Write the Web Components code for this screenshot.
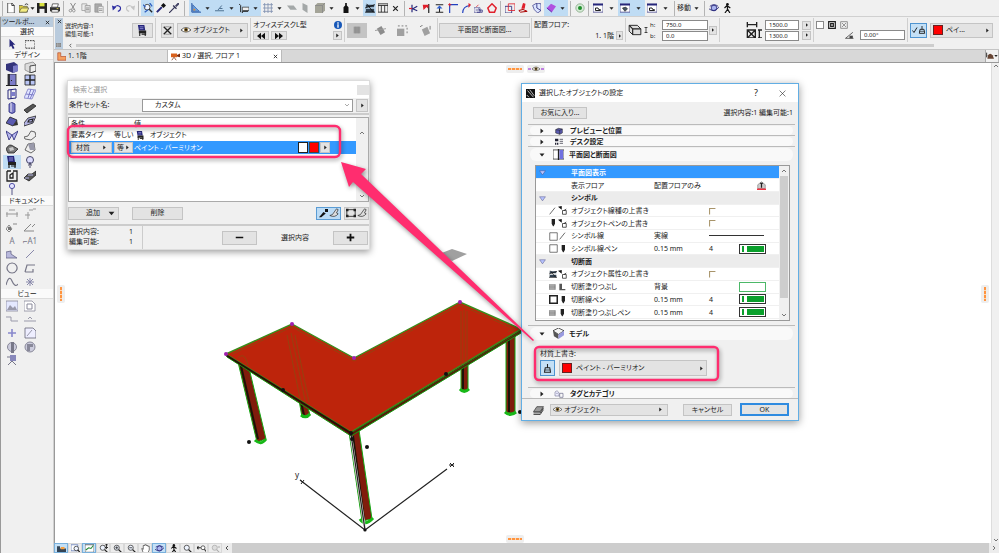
<!DOCTYPE html>
<html lang="ja">
<head>
<meta charset="utf-8">
<title>3D / 選択, フロア 1</title>
<style>
html,body{margin:0;height:100%;overflow:hidden;background:#f0f0f0}
body{font:7px/10px "Noto Sans","Noto Sans CJK JP",sans-serif;font-feature-settings:"palt";color:#222}
</style>
</head>
<body>
<cad-app></cad-app>
<script>
const BASE = `
*{box-sizing:border-box}
button,input,select{font:inherit;font-feature-settings:inherit;color:inherit;margin:0;padding:0;border:1px solid #c4c4c4;border-radius:0;background:#e3e3e3;outline:0;min-width:0}
button{display:flex;align-items:center;justify-content:center;white-space:nowrap;overflow:hidden}
input{background:#fff;border-color:#8a8a8a}
select{appearance:none}
h1,h2,p{margin:0;font:inherit}
.s{flex:1}
`;
class Base extends HTMLElement {
  connectedCallback() {
    if (this.shadowRoot) return;
    const t = document.createElement('template');
    t.innerHTML = `<style>${BASE}${this.css()}</style>${this.html()}`;
    this.attachShadow({mode:'open'}).append(t.content.cloneNode(true));
  }
}
const box = '<path d="M1 4l4-2 6 1v6l-4 2-6-2z" fill="#5a5ab0" stroke="#222" stroke-width=".8"/><path d="M1 4l6 1 4-2M7 5v6" stroke="#222" fill="none" stroke-width=".8"/>';
const g = (c,d,w=1) => `<path d="${d}" fill="none" stroke="${c}" stroke-width="${w}"/>`;
const f = (c,d,s='none') => `<path d="${d}" fill="${c}" stroke="${s}" stroke-width=".8"/>`;
const K='#222', N='#26267a', P='#7c7cc8', G='#909090', R='#e0202c';
const eye = f('#fff','M0 6q6-6 12 0q-6 5-12 0z',K)+'<circle cx="6" cy="5.8" r="2.4" fill="#8a6a2a"/><circle cx="6" cy="5.8" r="1.2" fill="#111"/>';
const mag = '<circle cx="5" cy="5" r="3.4" fill="#eef4ff" stroke="#333"/>'+g(K,'M7.5 7.5l3.5 3.5',1.6);
const chair = f(N,'M1 0h7l1 6H2z')+g('#9090d8','M3 2h4M3 4h4')+f('#222','M2 6h8v3H2z')+g(K,'M3 8v4M9 8v4M5 10h5',1.2);
const pen = f(K,'M4 0h5v7l-2 4-1 0-2-4z');
const brush = g(K,'M6 0v5M3 5h6l1 6h-8z',1.4)+g(K,'M2 8h8',1);
const ICONS = {
  caret:f(K,'M1 3h10l-5 6z'), right:f(K,'M3 1l6 5-6 5z'), down:f(K,'M1 3h10l-5 6z'), left:f(K,'M9 1L3 6l6 5z'),
  rew:f('#111','M6 1v10L0 6zM12 1v10L6 6z'), fwd:f('#111','M0 1v10l6-5zM6 1v10l6-5z'),
  tri:f('#b8c4ff','M1 3h10l-5 7z','#4a4a80'), chevd:g('#555','M2 4l4 4 4-4'), chevu:g('#555','M2 8l4-4 4 4',1.6), chevdn:g('#555','M2 4l4 4 4-4',1.6),
  chevl:g('#222','M8 2L4 6l4 4',1.6), chevr:g('#555','M4 2l4 4-4 4',1.6),
  x:g(K,'M2 2l8 8M10 2l-8 8',2), thinx:g(K,'M1 1l10 10M11 1L1 11',1),
  new:f('#fff','M2 0h5l3 3v9H2z',K)+g(K,'M7 0v3h3'), open:f('#d8c840','M0 3h4l1 1h5v7H0z','#554')+f('#f4ec80','M0 11l3-5h9l-3 5z','#554')+g(K,'M7 2q2-2 4 0'),
  save:f('#222','M0 0h12v12H0z')+f('#d8e040','M3 0h6v4H3z')+f('#eee','M3 7h6v5H3z'), print:f('#333','M0 5h12v5H0z')+f('#fff','M3 1h7l-1 4H2zM2 8h8v3H2z',K)+f('#d8d040','M8 6h2v1H8z'),
  cut:g('#888','M3 0l5 8M9 0L4 8',1.2)+g('#888','M4 8a1.6 1.6 0 1 0 .1.1M8 8a1.6 1.6 0 1 0 .1.1'), copy:f('#eee','M1 1h6v8H1z',G)+f('#ddd','M5 3h6v8H5z',G)+g(G,'M6 6h4M6 8h4'), paste:f('#aaa','M1 1h8v10H1z',G)+f('#eee','M5 4h6v8H5z',G)+g(G,'M6 7h4M6 9h4'),
  undo:g('#2b2ba0','M2 6q4-5 8-1 1 4-3 5',1.4)+f('#2b2ba0','M0 3l1 6 4-4z'), redo:g('#c4c4c4','M10 6q-4-5-8-1-1 4 3 5',1.4)+f('#c4c4c4','M12 3l-1 6-4-4z'),
  find:mag+g('#3060c0','M0 2l3 3M8 0l3 4M2 11l4-3',1.6), drop:g(N,'M1 11l6-6',2.4)+f('#111','M6 3l3-3 3 3-3 3z'), syringe:g('#335','M0 12l7-7',1.4)+g('#335','M5 3l4 4',1.6)+g('#446','M8 4l4-4',2.4),
  ruler:g('#2858a8','M1 0v11h11',1.2)+f('#6aa0dc','M2 2l8 8H2z','#2858a8')+f('#e08a30','M3 7h2v2H3z'), guide:g('#446688','M0 9h12M4 8l5-6M6 6h4',1.2), snap:f('#eee','M4 5h8v4H4z',K)+g(K,'M0 1l2 2v8M4 12v-2h7',1.2),
  grid:g('#8090b0','M2 0v12M6 0v12M10 0v12M0 2h12M0 6h12M0 10h12'), plane:f('#a4a8a8','M0 3h8l4 5H4z'), vplane:f('#a4a8a8','M3 0l6 3v9L3 8z'), cube:f('#a4a498','M0 3l3-3h9v9l-3 3H0z')+g('#888','M0 3h9v9M9 3l3-3'),
  drop2:f('#111','M5 0h2v3l2 2v7H3V5l2-2z'), stack:f('#345','M1 2h10v3H1zM1 7h10v4H1z')+g('#111','M0 6l12-4M2 1l8 10M0 11h12'), frame:g(K,'M0 1h12v10H0zM0 3h12M4 3v8M8 3v8'),
  split:g(N,'M4 1v10M4 7l7-4M4 6l7 3',1.6)+g(R,'M0 6h4',1.6), adj:g(K,'M9 0v12',1.6)+f(R,'M1 1l8 0-1 5-2-2-4 4z'), elev:g(K,'M1 1h10M1 11h10M6 5v6',1.4)+f('#3060d0','M2 6l4-4 4 4z'),
  cornr:g('#2040c0','M2 12V2h10',1.4)+g(R,'M0 2h4M2 0v4'), arc:g('#2040c0','M2 12q0-8 9-9',1.4)+f(R,'M9 0l3 2-3 4z'), resz:f('#fff','M0 5h8v6H0z',N)+g(R,'M3 4l3-3')+g(N,'M2 8h9v3H4M6 6l3 4'), house:g(R,'M1 6l5-5 5 5-2 5H3z',1.8),
  trim:g(N,'M0 4h8v8H0z')+g(R,'M4 1h8v8H4z'), boot:f(R,'M6 0l3 1-1 6H4z')+g('#a00','M1 9q5-3 10 1l-8 1z',1.2), shell:f('#dde6ff','M2 3l5-3 5 1v8l-4 3-4-4z',N)+g(N,'M7 0v6l5 3'),
  eraser:f('#b050e0','M1 6l5-5 6 3-5 7z')+g('#5020a0','M1 6l6 5'), green:'<circle cx="6" cy="6" r="5" fill="#d8ecd8" stroke="#8a8"/><circle cx="6" cy="6" r="2.4" fill="#20902c"/>',
  win:f('#fff','M0 1h12v10H0z',N)+g(N,'M0 2h12',2)+g(K,'M3 9V6h3l1 2h2v1z',1.2), win3:f('#fff','M0 1h12v10H0z',N)+g(N,'M0 2h12',2)+f('#456','M3 6l4-1 2 2-3 3z',K), orbit:'<circle cx="6" cy="6" r="3.4" fill="#aab4f0" stroke="#26267a"/>'+g(N,'M0 7q6 5 12-2M1 4q5-4 10 0'),
  walk:'<circle cx="6.5" cy="1.6" r="1.6" fill="#111"/>'+g('#111','M6.5 3v5l-3 4M6.5 7l3 5M3 6l3-3 4 3',1.4),
  chair, eye, pen, brush,
  mesh:g(K,'M1 1l10 10M11 1L1 11',1.8)+g('#888','M3 1h6M3 11h6'), info:'<circle cx="6" cy="6" r="6" fill="#1858b8"/>'+g('#fff','M6 2v2M6 5v5',2),
  sq:f('#999','M2 2h8v8H2z')+g('#888','M4 2v8M6 2v8M8 2v8',.6), sqr:f('#8c8c8c','M2 4l5-3 4 7-5 3z')+g('#999','M0 6l12-2'), sqe:f('#a0a0a0','M0 4h8v8H0z')+'<path d="M1 1h10v10" fill="none" stroke="#777" stroke-dasharray="2 2"/>', sqt:f('#a0a0a0','M2 5l6-3 3 7-6 3z')+g('#777','M0 2l3-2M11 1v4'),
  height:f('#ddd','M1 2h7l3 3v5H4L1 7z',K)+g(K,'M4 5h7M4 5v5M1 2l3 3'), vdim:g(K,'M6 0v12M3 1h6M3 11h6',1.5),
  dims:g(K,'M1 2h7M1 0v4M8 0v4M1 6h6v6H1zM1 6l6 6M7 6l-6 6M10 6v6M9 6h3M9 12h3'), anchor:g(K,'M1 1h10v10H1zM4 4h4v4H4z',1.8), anch2:g('#666','M1 1h10v10H1zM3 3l6 6M9 3l-6 6'), angle:g(K,'M0 11L11 2M0 11h12')+'<path d="M6 7h5v4H6z" fill="#444"/>',
  plan:f('#f4a060','M1 1h4v5h7v5H1z','#b04020'), cam:f('#d8601c','M0 2h8v5H0z')+f('#7a2c10','M8 4l4-2v5l-4-1z')+g('#7a2c10','M4 7l-3 4M4 7l3 4'),
  arrow:f(N,'M3 0l7 7-3 0 2 4-2 1-2-4-2 2z'), marq:'<path d="M0 2h12v9H0z" fill="none" stroke="#333" stroke-width="1.2" stroke-dasharray="2 1"/>',
  wall:f('#34347c','M0 3l8-2 4 3v6l-5 2-7-3z')+f(P,'M7 5l5-1v6l-5 2z'), wallg:f('#ddd','M1 3l8-2 3 3v6l-5 2-6-3z','#888')+f('#eee','M6 5l6-1v6l-6 2z',K),
  door:f(P,'M2 0h8v12H2z',K)+f(K,'M5 6h1v1H5zM0 11h12v1H0z')+g(K,'M3 0v12',1.6), window:f('#b8c4f4','M1 1h10v10H1z',K)+g(K,'M6 1v10M1 6h10',1.4), curtain:g(N,'M2 2l8-1v9l-8 1zM5 2v9')+f(P,'M5 4h4v4H5z'), grid2:f('#e0e4ff','M4 1l8 1-4 9-8-1z',P)+g(P,'M2 6l8 1M7 1L4 10M10 2L6 11'),
  column:f(P,'M3 2q3-3 6 0v8q-3 3-6 0z',N)+g('#dde','M5 1v9',1.2), beam:f('#555','M0 8L9 2l3 2-9 7z',K), roof:f('#5a5ab0','M0 8l4-6 7 3-4 6z',K)+f('#333','M7 11l4-6 1 5z'), slab:f('#b4b4e4','M0 8l4-5 8-2-3 7-9 3z',K)+g(K,'M4 7l1-2 4-1-1 3z',1.2),
  shellr:f('#b8b8ee','M0 2l6 4 6-4-4 9-2-5-3 5z',N), morph:f('#eee','M0 8l4-1 3-5 4 1 1 4-5 4-6-1z','#444'), mesh2:f('#777','M0 7q3-6 7-3l5 3-4 4H2z',K)+f('#ccc','M3 6l4-1 1 3-4 1z'), poly:f('#eee','M1 8l3-6 6-1 1 7-4 3z','#444')+f('#99a','M4 2l2 6 5 0-1-7z'),
  lamp:'<circle cx="6" cy="4" r="3.5" fill="#dcdcff" stroke="#446"/>'+g('#446','M6 6v3M4 9h4M5 11h2',1.2), zone:g(K,'M1 1h4M7 1h4v10H1V1M4 5l3-2v5H4z',1.3), stair:f('#555','M0 8L4 4h4l4-3v4L5 11z',K)+g('#bbe','M1 8h4M4 5h5',1),
  pin:'<circle cx="6" cy="3" r="2.6" fill="#e4e4ff" stroke="#55a"/>'+g('#558','M6 5v7',1),
  dim:g('#999','M0 7h12M1 5v5M11 5v5M3 3h6'), lev:g('#999','M1 8h5M4 5v7M5 3h4M9 2h3'), rad:g('#888','M3 4l3 4-3 3-3-3zM7 3h4')+f('#777','M2 6h3v3H2z'), ang:g('#888','M0 10L7 3M0 10h10M8 6l3-3'),
  fill:f('#b8b8dc','M0 10V4l5-1v3l6 4z','#668'), line:g('#88a','M2 10l8-8'), circ:g('#778','M6 1a5 5 0 1 0 .1 0z',1.2), pline:g('#778','M1 10L3 3h8M1 10h8V7',1.2), spl:g('#778','M0 9Q3-2 6 5t6 3',1.2), star:g('#88a','M6 2v8M2 6h8M3 3l6 6M9 3l-6 6'),
  pic:f('#e4e8ff','M0 1h12v10H0z','#889')+f('#99a','M1 10l3-5 3 3 2-2 2 4z'), draw:f('#fff','M0 1h8l3 3v7H0z','#889')+g('#889','M3 4h5v5H3z'), sec:g('#99a','M0 4h5v4h7'), el:g('#99a','M0 8h12M4 6l2-2 2 2'), ie:g('#88c','M6 2v8M2 6h8',1.6), det:f('#eef','M1 1h8l3 3v7H1z','#667')+g('#99a','M3 9l5-6'), ch1:'<circle cx="6" cy="6" r="4.5" fill="#ccd" stroke="#889"/>'+f('#778','M5 1h3v11H5z'), ch2:'<circle cx="6" cy="6" r="5" fill="#ccd" stroke="#889"/>'+f('#889','M3 3h6v3H6v4H3z'), cam2:f('#8888bb','M4 1h6v6H4z')+g('#778','M2 11l4-4 4 4M1 3h3'),
  logo:f('#111','M0 0h12v12H0z')+g('#ccc','M2 2l8 9M5 1l6 8M1 8l3 3',1.2), psec:f('#fff','M0 1h12v10H0z',K)+f('#7070e0','M7 1h4v10H7z')+g(K,'M6 0v12',1.4), boxes:box, model:f('#f4f4f4','M0 3l6-3 6 3-6 4z',K)+f('#555','M0 3l6 4v5L1 9z')+f('#9a9adf','M6 7l6-4v5l-6 4z'),
  desk:f('#223','M0 1h5v4H0zM0 7h2v3H0zM3 7h2v3H3z')+g('#223','M7 2h5M7 5h5M7 8h5'), tag:f('#eef','M0 3q4-4 6 2v4H0z','#668')+g('#668','M7 5h5v6H7zM2 5h2'),
  slash:g(K,'M1 11L9 1'), override:f('#111','M0 1l5-1 0 5zM1 2l4 4')+g(K,'M6 6h5v5H6zM8 6l3-2'), sqo:f('#fff','M1 1h10v10H1z',K), sqb:g(K,'M1 1h10v10H1z',2), hatch:f('#777','M0 2h10v8H0z')+g('#ddd','M0 4h10M0 6h10M0 8h10M3 2v8M6 2v8',.6), fillp:f('#555','M2 1v10h9V9H6V1z'), home:f('#ccc','M1 5l5-4 5 4v5H1z','#777')+g(K,'M4 3h4M6 3v6',1.6)+g('#f02030','M0 11h12',1.8), chk:g('#a8946a','M1 11V1h10',1.8),
  layers:f('#999','M0 8l4-6h8l-4 6z',K)+g(K,'M0 9.500h8l4-6M0 11.5h8l4-6'), pick:f('#111','M0 11l6-7 3 2-6 5z')+f('#111','M8 0h4v4H8z'), shoe:f('#ddd','M1 9l3-1 5-7 2 1-2 4 2 1q-4 5-10 2z',K), mrect:g(K,'M1 2h10v8H1z')+f(K,'M0 1h3v3H0zM9 1h3v3H9zM0 8h3v3H0zM9 8h3v3H9z'),
  minus:g('#111','M1 6h10',2), plus:g('#111','M1 6h10M6 1v10',2.4), check:g('#111','M1 7l3 4 6-10',1.8),
  mag, magp:mag+g(K,'M3 5h4M5 3v4'), magm:mag+g(K,'M3 5h4'), hand:f('#fff','M3 12L1 6l2 1V2h2V1h2v1h2v1h2v5l-2 4z',K), axo:f('#345','M0 3h4v3h8v5H0z')+f('#f8a040','M5 4h5v3H5z'), chart:f('#fff','M0 1h12v10H0z',K)+g('#283','M1 8l4-3 3 1 3-4',1.4),
  magw:f('#fff','M0 1h9v8H0z','#3858a8')+'<circle cx="7" cy="6" r="3" fill="#eef4ff" stroke="#333"/>'+g(K,'M9 8l3 3',1.6), magud:mag+g(K,'M10 0v6M8 2l2-2 2 2M8 4l2 2 2-2',1.2), back:g(K,'M0 5h5M2 3L0 5l2 2',1.4)+'<circle cx="8" cy="5" r="2.6" fill="#fff" stroke="#333"/>'+g(K,'M10 7l2 3',1.4),
  magg:'<circle cx="5" cy="5" r="3.4" fill="#ddd" stroke="#aaa"/>'+g('#aaa','M7.5 7.5l3.5 3.5M9 4h3',1.4),
  crowd:f('#643','M3 5q3-5 7 0l2 5H2z')+g(K,'M1 1v7',1.4)
};
class CadIcon extends Base {
  css(){ const w=this.getAttribute('w')||10, h=this.getAttribute('h')||w; return `:host{display:inline-block;flex:none;width:${w}px;height:${h}px}svg{display:block;width:100%;height:100%}`; }
  html(){ return `<svg viewBox="0 0 12 12" aria-hidden="true">${ICONS[this.getAttribute('name')]||''}</svg>`; }
}
customElements.define('cad-icon', CadIcon);
const ic = (n,w=10,h=w) => `<cad-icon name="${n}" w="${w}" h="${h}"></cad-icon>`;

class CadToolbar extends Base {
  css(){ return `:host{display:flex;height:17px;align-items:stretch;background:#f0f0f0;border-bottom:1px solid #d0d0d0;overflow:hidden}
  button{flex:none;width:13px;border:0;background:none}.c{width:11px}.c.w{width:14px}.n{width:5px}.on{background:#bfdcf4}
  i{flex:none;width:5px;background:linear-gradient(#b4b4b4,#b4b4b4) center/1px 15px no-repeat}.grip{width:4px}.wide{width:9px}b{flex:none;width:2px}.t{width:14px}`; }
  html(){
    const seq='grip new open ,n save print | cut copy paste | undo redo | find* drop syringe |w ruler* ,* guide* ,* snap* ,* grid , plane vplane _ cube , _ drop2 , stack* frame x8 | split adj elev cornr arc resz house | trim boot shell _ eraser* ,* | green | win ,w win3* ,w* win ,w | 移動 , | orbit walk';
    return seq.split(' ').map(t=>{
      const on=t.endsWith('*')?' on':''; t=t.replace('*','');
      if(t==='grip')return '<i class="grip"></i>';
      if(t[0]==='|')return `<i class="${t[1]?'wide':''}"></i>`;
      if(t==='_')return '<b></b>';
      if(t===',n')return `<button class="c n" aria-label="メニュー">${ic('caret',5)}</button>`;
      if(t[0]===',')return `<button class="c ${t[1]||''}${on}" aria-label="メニュー">${ic('caret',5)}</button>`;
      if(t==='移動')return '<button class="t">移動</button>';
      if(t==='x8')return `<button aria-label="クリア">${ic('x',7)}</button>`;
      const z='adj elev split resz guide'.includes(t)?9:10;
      return `<button class="${on}" aria-label="${t}">${ic(t,z)}</button>`;
    }).join('');
  }
}
customElements.define('cad-toolbar', CadToolbar);

class CadToolbox extends Base {
  css(){ return `:host{display:block;background:#f0f0f0;border-right:1px solid #d0d0d0;border-left:1px solid #999}
  header{display:flex;align-items:center;justify-content:space-between;height:10px;padding:0 3px 0 1px;background:#b9cbdd}
  header button{border:0;background:none}
  h2{height:10px;text-align:center;background:#fafafa;border-bottom:1px solid #ddd;line-height:9px}
  div{display:grid;grid-template-columns:18px 18px;grid-auto-rows:1fr;padding:0 2px}
  div button{border:0;background:none}.on{background:#bfdcf4}
  .a{height:13px}.b{height:136px}.c{height:83px}.d{height:68px}span{color:#778;font-size:8px}`; }
  html(){
    const grp=(c,s)=>`<div class="${c}">${s.split(' ').map(n=>n==='-'?'<i></i>':`<button class="${n==='chair'?'on':''}" aria-label="${n}">${n==='A'?'<span>A</span>':n==='A1'?'<span>⌐A1</span>':ic(n,c==='a'?10:12)}</button>`).join('')}</div>`;
    return `<header>ツールボ...<button aria-label="閉じる">${ic('x',5)}</button></header><h2>選択</h2>${grp('a','arrow marq')}<h2>デザイン</h2>${grp('b','wall wallg door window curtain grid2 column beam roof slab shellr morph mesh2 poly chair lamp zone stair pin -')}<h2>ドキュメント</h2>${grp('c','dim lev rad ang A A1 fill line circ pline spl star')}<h2>ビュー</h2>${grp('d','pic draw sec el ie det ch1 ch2 cam2 -')}`;
  }
}
customElements.define('cad-toolbox', CadToolbox);

class CadInfoBar extends Base {
  css(){ return `:host{display:grid;grid-template-columns:8px 1fr;height:32px;background:#f0f0f0;padding:1px 0 0 1px}
  aside{display:flex;flex-direction:column;justify-content:space-between;align-items:center;background:#b9cbdd;padding:1px 0}
  aside button{border:0;background:none}
  .row{display:flex;height:24px;overflow:hidden}
  section{flex:none;display:flex;align-items:center;border-right:1px solid #cfcfcf;padding:0 2px;gap:3px}
  .col{display:flex;flex-direction:column;gap:1px;justify-content:center}.line{display:flex;gap:2px;align-items:center;justify-content:space-between}
  .b{height:15px}.sm{width:9px;height:9px;flex:none}.pl{border:0;background:none;width:20px}.on{background:#c4c4c4;width:21px;border:0}
  input[type=text]{height:10px;padding:0 3px;font-size:6px;line-height:8px;min-width:0}
  input[type=checkbox]{appearance:none;width:8px;height:8px}
  p{line-height:8px;font-size:6px}.sc{display:flex;align-items:center;height:7px;padding-left:3px}.sc button{border:0;background:none;width:8px}.bar{width:92%;height:3px;background:#cdcdcd;margin-left:2px}
  label{display:flex;gap:3px;align-items:center;justify-content:space-between;font-size:6px}.last{flex:1;border:0}.last .b:last-child{flex:1;max-width:63px;justify-content:flex-start;gap:3px;padding:0 2px}
  .red{width:10px;height:10px;background:#f00;border:1px solid #622}`; }
  html(){ return `<aside><button aria-label="閉じる">${ic('x',5)}</button>${ic('hatch',6)}</aside>
  <div><div class="row">
  <section style="width:93px;justify-content:space-between"><p>選択内容:1<br>編集可能:1</p><button class="b" style="width:21px" aria-label="オブジェクト">${ic('chair',11)}</button></section>
  <section style="width:95px;padding-left:5px"><button class="b" style="width:13px" aria-label="設定">${ic('mesh',9)}</button><button class="b s" style="padding:0 3px;gap:2px">${ic('eye',10)}オブジェクト<span class="s"></span>${ic('right',5)}</button></section>
  <section style="width:94px"><div class="col s"><div class="line"><span>オフィスデスクL型</span>${ic('info',8)}</div><div class="line"><button class="sm" style="width:16px" aria-label="前へ">${ic('rew',8)}</button><button class="sm" style="width:16px" aria-label="次へ">${ic('fwd',8)}</button><span class="s"></span><button class="sm" aria-label="選択">${ic('right',5)}</button></div></div></section>
  <section style="width:93px"><button class="b on" aria-label="配置 1">${ic('sq',10)}</button><button class="b pl" aria-label="配置 2">${ic('sqr',11)}</button><button class="b pl" aria-label="配置 3">${ic('sqe',11)}</button><button class="b pl" aria-label="配置 4">${ic('sqt',11)}</button></section>
  <section style="width:94px;padding:0 1px"><button class="b s">平面図と断面図...</button></section>
  <section style="width:94px"><div class="col s"><span>配置フロア:</span><div class="line"><span class="s"></span>1. 1階<button class="sm" style="width:7px" aria-label="フロア">${ic('right',4)}</button></div></div></section>
  <section style="width:94px;gap:1px">${ic('height',14)}${ic('vdim',6,16)}<div class="col s"><label>h:<input type="text" value="750.0" style="width:46px"></label><label>b:<input type="text" value="0.0" style="width:46px"></label></div><button class="sm" style="width:8px" aria-label="高さ">${ic('right',4)}</button></section>
  <section style="width:94px;padding-left:26px">${ic('dims',16)}<div class="col"><input type="text" value="1500.0" aria-label="幅" style="width:34px"><input type="text" value="1300.0" aria-label="奥行" style="width:34px"></div><div class="col"><button class="sm" aria-label="幅を選択">${ic('right',4)}</button><button class="sm" aria-label="奥行を選択">${ic('right',4)}</button></div></section>
  <section style="width:94px"><div class="col s"><div class="line" style="justify-content:flex-start;gap:4px"><input type="checkbox" aria-label="ミラー">${ic('anchor',8)}${ic('anch2',8)}</div><div class="line"><span class="s"></span>${ic('angle',17,8)}<input type="text" value="0.00°" aria-label="角度" style="width:45px"></div></div></section>
  <section class="last"><button class="b" style="width:17px;background:#c4e0f6;border-color:#4f94d0" aria-label="材質上書き">${ic('check',6)}${ic('brush',8)}</button><button class="b"><span class="red"></span>ペイ...<span class="s"></span>${ic('right',5)}</button></section>
  </div><div class="sc"><button aria-label="左へ">${ic('chevl',5)}</button><div class="bar"></div></div></div>`; }
}
customElements.define('cad-info-bar', CadInfoBar);

class CadTabs extends Base {
  css(){ return `:host{display:flex;height:14px;background:#d8d8d8;border-bottom:1px solid #999;border-top:1px solid #c4c4c4}
  button{border:0;border-right:1px solid #bbb;width:114px;justify-content:flex-start;gap:2px;padding:0 3px;background:#e2e2e2;font-size:7px}.on{background:#fff}.end{width:14px;background:#f0f0f0;padding:0;gap:0;border-left:1px solid #aaa}`; }
  html(){ return `<button role="tab">${ic('plan',9)}1. 1階</button><button class="on" role="tab" aria-selected="true">${ic('cam',9)}3D / 選択, フロア 1<span class="s"></span>${ic('x',5)}</button><span class="s"></span><button class="end" aria-label="ビュー">${ic('crowd',8)}${ic('caret',4)}</button>`; }
}
customElements.define('cad-tabs', CadTabs);

class CadStatus extends Base {
  css(){ return `:host{display:flex;height:10px;background:#f0f0f0;align-items:stretch}
  button{width:14px;flex:none;border:1px solid #d8d8d8;background:#ececec}.on{background:#c4e0f6;border-color:#78b0dc}.p{border:0;width:10px}.bar{flex:1;background:#cdcdcd}`; }
  html(){ return 'axo* magw chart* magud magp magm hand orbit* walk mag back magg'.split(' ').map(n=>`<button class="${n.endsWith('*')?'on':''}" aria-label="${n}">${ic(n.replace('*',''),9)}</button>`).join('')+`<button class="p" aria-label="左へ">${ic('chevl',6)}</button><div class="bar"></div><button class="p" aria-label="右へ">${ic('chevr',6)}</button>`; }
}
customElements.define('cad-status', CadStatus);

class CadModel extends Base {
  css(){ return `:host{display:block;background:#fff;position:relative;overflow:hidden;border-left:1px solid #999;border-right:1px solid #ddd}
  svg.m{position:absolute;left:0;top:0}
  .tab{position:absolute;background:#eee;border:0;border-radius:2px;padding:0}
  .tab i{display:block}.h{width:18px;height:8px}.h i{width:14px;height:2px;background:repeating-linear-gradient(90deg,#ff9440 0 3px,#ffd8b0 3px 4px)}.v{width:8px;height:18px}.v i{width:2px;height:14px;background:repeating-linear-gradient(#ff9440 0 3px,#ffd8b0 3px 4px)}
  .t{left:calc(50% - 17px);top:2px}.e{left:calc(50% + 4px);top:2px;gap:1px}.e i{width:3px;background:#c080e0}.bt{left:calc(50% - 17px);bottom:0}.l{left:2px;top:222px}.r{right:2px;top:222px}`; }
  html(){
    const leg=(p,q)=>`<path d="${p}" fill="#801c0c" stroke="#12a812"/><path d="${q}" fill="none" stroke="#1c1408" stroke-width="2"/>`;
    const dot=(x,y,c='#111',r=2)=>`<circle cx="${x}" cy="${y}" r="${r}" fill="${c}"/>`;
    return `<svg class="m" width="930" height="480" viewBox="55 63 930 480" role="img" aria-label="L型デスク">
    <path d="M439 254l13-5 15 5-15 7z" fill="#a0a0a0"/>
    ${leg('M238 362l11 6 17 71-9 3z','M241 366l17 73')}${leg('M299 400l8 4 3 11-8 2z','M301 402l3 13')}${leg('M461 365h7v25h-7z','M463 365v24')}${leg('M506 336h9v77h-9z','M509 338v74')}
    <path d="M255 440q6 6 11-1M301 415q5 4 9-1M460 389q4 5 9 0M505 412q5 5 11 0" fill="none" stroke="#18b818" stroke-width="3"/>
    ${leg('M349 432l10-2 13 89-10 2z','M353 436l11 83')}
    <path d="M360 519q5 8 13-1" fill="none" stroke="#18b818" stroke-width="3"/>
    <path d="M226 354l125 78 170-103v4L351 436 227 357z" fill="#5a1408" stroke="#12a012"/>
    <path d="M226 354l66-30 62 34 106-56 61 27-170 103z" fill="#bd240b" stroke="#3a8c1c" stroke-width="1.4"/>
    <path d="M232 354l60-27 62 34 106-56 54 24M287 335l14 68M291 333l15 72M295 335l14 67M461 311v55M464 310v54M467 311v52M238 358q5-5 8 1l2 6M508 332q3-4 6 0" fill="none" stroke="#8c4a10" stroke-width=".8"/>
    <path d="M226 355l125 78" stroke="#241006" stroke-width="1.6"/><path d="M351 433l170-102" stroke="#2a6010" stroke-width="1"/>
    <path d="M351 436l14 94" stroke="#ddd" stroke-width="2.4"/><path d="M300 480l65 50 82-61M351 434l14 96" fill="none" stroke="#222" stroke-width="1.2"/>
    ${dot(226,354,'#a020b0')}${dot(292,324,'#a020b0')}${dot(354,358,'#a020b0')}${dot(460,302,'#a020b0')}
    ${dot(283,390)}${dot(446,374)}${dot(249,442)}${dot(367,447)}${dot(351,433)}${dot(352,439)}${dot(365,530,'#111',1.6)}${dot(520,412)}
    <path d="M450 463l4 4M454 463l-4 4M449 465h5M300 480l4 3M304 480l-3 4" stroke="#222"/>
    <text x="295" y="478" font-size="8" fill="#222">y</text></svg>
    <button class="tab h t" aria-label="上パネル"><i></i></button><button class="tab h e" aria-label="表示"><i></i>${ic('eye',8)}<i></i></button><button class="tab h bt" aria-label="下パネル"><i></i></button><button class="tab v l" aria-label="左パネル"><i></i></button><button class="tab v r" aria-label="右パネル"><i></i></button>`;
  }
}
customElements.define('cad-model', CadModel);

class FindDialog extends Base {
  css(){ return `:host{display:flex;flex-direction:column;width:303px;background:#f0f0f0;border:1px solid #ddd;box-shadow:0 2px 7px #0006}
  header{display:flex;align-items:center;justify-content:space-between;height:17px;padding-left:5px;background:#fff;color:#999}header button{border:0;width:12px;height:10px}
  .set{display:flex;align-items:center;height:14px;gap:3px;padding:0 1px}.set label{width:70px}.sel{flex:1;display:grid;align-items:center}.sel>*{grid-area:1/1}.sel select{height:13px;padding-left:12px;background:#fff;border-color:#999}.sel cad-icon{justify-self:end;margin-right:3px}
  .ar{width:12px;height:13px}hr{width:100%;border:0;border-top:2px solid #ccc;margin:1px 0 2px}
  .list{display:flex;height:85px;border:1px solid #aaa;background:#fff}.sb{width:12px;background:#f0f0f0;display:flex;flex-direction:column;justify-content:space-between;align-items:center;padding:12px 0 2px}
  .tw{flex:1}table{width:100%;border-collapse:collapse;table-layout:fixed}th,td{padding:0 0 0 2px;font-weight:400;text-align:left;white-space:nowrap;height:12px}th{height:11px}td:nth-child(3),th:nth-child(3){padding-left:0}tr.on td{background:#3399ff;color:#fff;height:13px}tr.on button{color:#222;height:11px;width:100%;justify-content:space-between;padding:0 4px}
  .v{display:flex;align-items:center;gap:1px}tr.on .v button{width:10px;padding:0;justify-content:center}.sw{width:10px;height:11px;background:#fff;border:1px solid #222}.sw.r{background:#f00;border-color:#fcc;outline:1px solid #444;outline-offset:-1px}
  .btns{display:flex;height:22px;align-items:center;gap:3px}.btns button{height:13px;width:51px;gap:3px}.btns .i{width:25px;gap:1px}.btns .del{margin-left:10px}.on2{background:#bcdcf6;border-color:#5a9cd4}
  .btns .drop{justify-content:flex-end;gap:8px;padding-right:3px}
  footer{display:flex;align-items:center;border-top:2px solid #ccc;height:25px;padding-right:1px}.cnt{width:75px;height:23px;border-right:1px solid #ccc;padding:1px 9px 0 1px}.cnt p{display:flex;justify-content:space-between}footer>button{height:14px;width:35px}footer .mi{margin-left:79px}`; }
  html(){ return `<header>検索と選択<button aria-label="閉じる"></button></header>
  <div class="set"><label for="q">条件セット名:</label><span class="sel"><select id="q"><option>カスタム</option></select>${ic('chevd',6)}</span><button class="ar" aria-label="セット">${ic('right',5)}</button></div><hr>
  <div class="list"><div class="tw"><table><colgroup><col style="width:43px"><col style="width:22px"><col></colgroup>
  <tr><th>条件</th><th></th><th>値</th></tr><tr><td>要素タイプ</td><td>等しい</td><td><span class="v">&thinsp;${ic('chair',9)}&nbsp;&nbsp;オブジェクト</span></td></tr>
  <tr class="on"><td><button>材質${ic('right',5)}</button></td><td><button style="width:19px;padding:0 2px">等${ic('right',5)}</button></td><td><span class="v">ペイント - バーミリオン<span class="s"></span><span class="sw"></span><span class="sw r"></span><button aria-label="材質を選択">${ic('right',5)}</button><span style="width:25px"></span></span></td></tr></table></div><div class="sb">${ic('chevu',6)}${ic('chevdn',6)}</div></div>
  <div class="btns"><button class="drop">追加${ic('down',7)}</button><button class="del">削除</button><span class="s"></span><button class="i on2" aria-label="属性取得">${ic('pick',9)}${ic('shoe',10)}</button><button class="i" aria-label="範囲取得">${ic('mrect',10)}${ic('shoe',10)}</button></div>
  <footer><div class="cnt"><p>選択内容:<span>1</span></p><p>編集可能:<span>1</span></p></div><button class="mi" aria-label="減らす">${ic('minus',9)}</button><span class="s" style="text-align:center">選択内容</span><button aria-label="増やす">${ic('plus',9)}</button></footer>`; }
}
customElements.define('find-dialog', FindDialog);

class CadSection extends Base {
  css(){ const open=this.hasAttribute('open'); return `:host{display:block;border-top:1px solid #bbb;padding:1px 2px 0}
  button{width:100%;height:${open?13:9}px;border:0;border-radius:6px;background:#f9f9f9;justify-content:flex-start;font-weight:700;padding-left:9px;line-height:9px;overflow:visible}cad-icon+cad-icon{margin:0 5px 0 8px}`; }
  html(){ const open=this.hasAttribute('open'); return `<button aria-expanded="${open}">${ic(open?'down':'right',6)}${ic(this.getAttribute('icon'),open?11:12,open?11:8)}<slot></slot></button>`; }
}
customElements.define('cad-section', CadSection);

class SettingsDialog extends Base {
  css(){ return `:host{display:flex;flex-direction:column;width:278px;background:#f0f0f0;border:1px solid #62aee4;box-shadow:0 2px 8px #0006}
  header{display:flex;align-items:center;height:18px;background:#fff;padding:0 8px 0 4px;gap:4px}header button{border:0;background:none;width:16px;height:14px;font-size:9px}header button+button{margin-left:6px}
  .fav{display:flex;align-items:center;justify-content:space-between;height:22px;padding:0 5px 0 11px}.fav button{width:54px;height:12px}
  .in{padding:0 3px 0 6px;display:block}
  .list{display:flex;height:156px;margin:4px 8px 4px 13px;border:1px solid #999;background:#fff;overflow:hidden}
  table{flex:1;height:153px;border-collapse:collapse;table-layout:fixed;width:100%}td,th{padding:0;font-weight:400;text-align:left;white-space:nowrap;height:12px;border-bottom:1px solid #f0f0f0;line-height:9px}
  th{font-weight:700;background:#ececec}.on th{background:#3399ff;color:#fff}td cad-icon{margin-right:1px}cad-icon{vertical-align:middle}
  .c{text-align:center}.p{display:block;width:27px;height:10px;border:1px solid #333;background:linear-gradient(90deg,#fff 2px,#0aa02c 2px 4px,#fff 4px 7px,#0aa02c 7px);outline:1px solid #fff;outline-offset:-2px}.p.o{background:#fff;border-color:#4cb868}.ln{display:block;width:55px;border-top:1px solid #333}
  .sb{width:10px;background:#f0f0f0;display:flex;flex-direction:column;align-items:center;gap:2px;padding:2px 0}.sb div{width:8px;flex:1;background:#cdcdcd;margin-bottom:12px}
  .ov{padding:9px 8px 8px 18px;height:47px}.ov div{display:flex;gap:4px;margin-top:1px}.ov button{height:16px}.ov .cb{width:15px;background:#c4e0f6;border-color:#4f94d0}.mat{width:148px;justify-content:flex-start;padding:0 2px;gap:4px}.red{width:10px;height:10px;background:#f00;border:1px solid #622}
  footer{display:flex;align-items:center;height:22px;padding:0 9px;border-top:1px solid #bbb;gap:4px}footer button{height:12px;width:49px}footer .o{width:118px;padding:0 4px 0 2px;gap:2px}.can{margin-left:auto}footer .ok{margin-left:4px;border:2px solid #2f8be0;height:13px}`; }
  html(){
    const chk=`<td class="k" colspan="2">${ic('chk',7)}</td>`;
    const row=(i,n,v,k)=>`<tr><td></td><td>${i}</td><td>${n}</td><td>${v}</td>${k}</tr>`;
    const head=(n,c='')=>`<tr class="${c}"><th class="c">${ic('tri',7)}</th><th></th><th colspan="4">${n}</th></tr>`;
    const pen4='<td>4</td><td><span class="p"></span></td>';
    return `<header>${ic('logo',9)}<span class="s">選択したオブジェクトの設定</span><button aria-label="ヘルプ">?</button><button aria-label="閉じる">${ic('thinx',7)}</button></header>
    <div class="fav"><button>お気に入り...</button><span>選択内容:1 編集可能:1</span></div>
    <div class="in"><cad-section icon="boxes">プレビューと位置</cad-section><cad-section icon="desk">デスク設定</cad-section><cad-section icon="psec" open>平面図と断面図</cad-section></div>
    <div class="list"><table><colgroup><col style="width:13px"><col style="width:22px"><col style="width:83px"><col style="width:55px"><col style="width:30px"><col></colgroup>
    ${head('平面図表示','on')}
    ${row('','表示フロア','配置フロアのみ',`<td></td><td><span style="padding-left:18px">${ic('home',9)}</span></td>`)}
    ${head('シンボル')}
    ${row(ic('slash',8)+ic('override',9),'オブジェクト線種の上書き','',chk)}
    ${row(ic('pen',8)+ic('override',9),'オブジェクトペンの上書き','',chk)}
    ${row(ic('sqo',9)+ic('slash',8),'シンボル線','実線','<td colspan="2"><span class="ln"></span></td>')}
    ${row(ic('sqo',9)+ic('pen',8),'シンボル線ペン','0.15 mm',pen4)}
    ${head('切断面')}
    ${row(ic('stack',8)+ic('override',9),'オブジェクト属性の上書き','',chk)}
    ${row(ic('hatch',8)+ic('fillp',8),'切断塗りつぶし','背景','<td></td><td><span class="p o"></span></td>')}
    ${row(ic('sqb',9)+ic('pen',8),'切断線ペン','0.15 mm',pen4)}
    ${row(ic('hatch',8)+ic('pen',8),'切断塗りつぶしペン','0.15 mm',pen4)}
    </table><div class="sb">${ic('chevu',6)}<div></div>${ic('chevdn',6)}</div></div>
    <div class="in"><cad-section icon="model" open>モデル</cad-section></div>
    <div class="ov">材質上書き:<div><button class="cb" aria-label="材質上書き">${ic('brush',9)}</button><button class="mat"><span class="red"></span>ペイント - バーミリオン<span class="s"></span>${ic('right',5)}</button></div></div>
    <div class="in"><cad-section icon="tag">タグとカテゴリ</cad-section></div>
    <footer>${ic('layers',15,10)}<button class="o">${ic('eye',9)}オブジェクト<span class="s"></span>${ic('right',5)}</button><button class="can">キャンセル</button><button class="ok">OK</button></footer>`;
  }
}
customElements.define('settings-dialog', SettingsDialog);

class CadCallout extends Base {
  css(){ return `:host{display:block;pointer-events:none}svg{display:block;filter:drop-shadow(1px 2px 2px #0006)}`; }
  html(){ return `<svg width="740" height="400" viewBox="0 0 740 400" aria-hidden="true"><rect x="68" y="126" width="272" height="31" rx="5" fill="none" stroke="#ff2d6f" stroke-width="2.4"/><rect x="535" y="347" width="183" height="33" rx="4" fill="none" stroke="#ff2d6f" stroke-width="2.4"/><path d="M341 162l25 7-5 5L534 340l-1 1L353 182l-4 5z" fill="#ff2d6f"/></svg>`; }
}
customElements.define('cad-callout', CadCallout);

class CadApp extends Base {
  css(){ return `:host{display:grid;position:relative;height:100vh;grid-template:"t t t" 17px "b i i" 32px "b v v" 14px "b m y" 1fr "b s s" 10px / 54px 1fr 7px;overflow:hidden}
  cad-toolbar{grid-area:t}cad-toolbox{grid-area:b}cad-info-bar{grid-area:i}cad-tabs{grid-area:v}cad-model{grid-area:m}cad-status{grid-area:s}
  nav{grid-area:y;background:#f0f0f0;display:flex;flex-direction:column;justify-content:space-between;align-items:center}
  find-dialog,settings-dialog,cad-callout{position:absolute}find-dialog{left:67px;top:80px}settings-dialog{left:521px;top:83px}cad-callout{left:0;top:0}`; }
  html(){ return `<cad-toolbar></cad-toolbar><cad-toolbox></cad-toolbox><cad-info-bar></cad-info-bar><cad-tabs></cad-tabs><cad-model></cad-model><nav>${ic('chevu',6)}${ic('chevdn',6)}</nav><cad-status></cad-status><find-dialog></find-dialog><settings-dialog></settings-dialog><cad-callout></cad-callout>`; }
}
customElements.define('cad-app', CadApp);
</script>
</body>
</html>
